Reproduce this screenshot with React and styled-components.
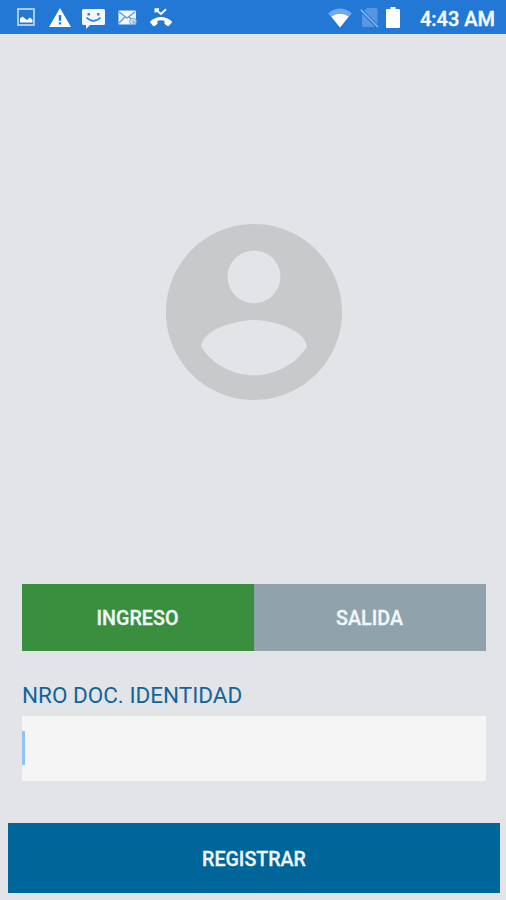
import React, { Component } from 'react';
import styled, { createGlobalStyle } from 'styled-components';

class App extends Component {
  state = { mode: 'ingreso' };

  render() {
    const { mode } = this.state;

    return (
      <>
        <GlobalStyle />
        <Screen>
          <StatusBar>
            <Notifications>
              <Icon $width={18} $height={18} viewBox="0 0 18 18">
                <rect x="1" y="1" width="16" height="16" fill="none" stroke="#b4d2f4" strokeWidth="1.8" />
                <path d="M3 14.500v-4L5.500 8.500l3 2.500 1.500 1 3-2.500 2.500 2.500v2.500z" fill="#fff" />
              </Icon>
              <Icon $width={22} $height={19} $left={14} viewBox="0 0 22 19">
                <path
                  fillRule="evenodd"
                  d="M0 19h22L11 0 0 19zm12.200-2.500H9.800v-2.300h2.400v2.300zm0-3.800H9.800V7h2.400v5.700z"
                  fill="#fff"
                />
              </Icon>
              <Icon $width={23} $height={20} $left={11} $top={1} viewBox="0 0 23 20">
                <path d="M1.500 0h20Q23 0 23 1.500v13q0 1.500-1.500 1.500H8l-4 4v-4H1.500Q0 16 0 14.500v-13Q0 0 1.500 0z" fill="#f2f8ff" />
                <path d="M5.500 4H8v2.500H5.500zM15 4h2.500v2.500H15z" fill="#3d83d9" />
                <path d="M4.500 8.500Q11.500 15.500 18.500 8.500" fill="none" stroke="#3d83d9" strokeWidth="1.700" />
              </Icon>
              <Icon $width={19} $height={16} $left={13} $top={2} viewBox="0 0 19 16">
                <rect x="0.500" y="0.500" width="17.500" height="14" rx="1" fill="#f2f8ff" />
                <path
                  d="M1 2l8 6 8-6M1 13l6-6M11 7l3 3"
                  fill="none"
                  stroke="#5a97e0"
                  strokeWidth="1.300"
                />
                <circle cx="15" cy="11.500" r="3.300" fill="#d9e9fb" stroke="#6ea4e6" />
                <path d="M14 11.500q1-2 2 0t-1.500 1.500" fill="none" stroke="#4789dc" strokeWidth="0.900" />
              </Icon>
              <Icon $width={22} $height={19} $left={13} viewBox="0 0 22 19">
                <path d="M5.500 4.500V1.300H9M6 1.800l5 4.200 5-4.700" fill="none" stroke="#fff" strokeWidth="1.900" />
                <path
                  d="M11 9C6.800 9 3 10.700.4 13.300c-.5.500-.5 1 0 1.500L3 17.800c.5.500 1 .5 1.500.1L7 16.200c.4-.3.500-.6.500-1v-2.500q3.500-1 7 0v2.500c0 .4.100.7.500 1l2.500 1.700c.5.400 1 .4 1.500-.1l2.600-3c.5-.5.5-1 0-1.500C19 10.700 15.200 9 11 9z"
                  fill="#fff"
                />
              </Icon>
            </Notifications>
            <System>
              <Icon $width={24} $height={20} viewBox="0 0 25 20">
                <path d="M12.500 20L0 5Q12.500-5 25 5z" fill="#72a9e8" />
                <path d="M12.500 20L3.500 8.500Q12.500 2.500 21.500 8.500z" fill="#fff" />
              </Icon>
              <Icon $width={19} $height={20} $left={8} viewBox="0 0 19 20">
                <path d="M7 0h9q1.500 0 1.500 1.500V16L4.500 3zM2 5.500L15 19H3.500Q2 19 2 17.500z" fill="#5796e1" />
                <path d="M.8 1.800L18 19" stroke="#8ab8ed" strokeWidth="1.500" />
              </Icon>
              <Icon $width={14} $height={21} $left={7} $top={-1} viewBox="0 0 14 21">
                <path d="M4.500 0h5v2H13q1 0 1 1v17q0 1-1 1H1q-1 0-1-1V3q0-1 1-1h3.500z" fill="#fff" />
              </Icon>
              <Clock>4:43 AM</Clock>
            </System>
          </StatusBar>

          <Photo>
            <Avatar viewBox="2 2 20 20">
              <path
                fillRule="evenodd"
                d="M12 2C6.480 2 2 6.480 2 12s4.480 10 10 10 10-4.480 10-10S17.520 2 12 2zm0 3c1.660 0 3 1.340 3 3s-1.340 3-3 3-3-1.340-3-3 1.340-3 3-3zm0 14.200c-2.500 0-4.710-1.280-6-3.220.030-1.990 4-3.080 6-3.080 1.990 0 5.970 1.090 6 3.080-1.290 1.940-3.500 3.220-6 3.220z"
              />
            </Avatar>
          </Photo>

          <Form>
            <Toggle>
              <ToggleButton
                type="button"
                $active={mode === 'ingreso'}
                onClick={() => this.setState({ mode: 'ingreso' })}
              >
                INGRESO
              </ToggleButton>
              <ToggleButton
                type="button"
                $active={mode === 'salida'}
                onClick={() => this.setState({ mode: 'salida' })}
              >
                SALIDA
              </ToggleButton>
            </Toggle>
            <Label>NRO DOC. IDENTIDAD</Label>
            <Field>
              <Caret />
            </Field>
          </Form>

          <Submit type="button">REGISTRAR</Submit>
        </Screen>
      </>
    );
  }
}

export default App;

const GlobalStyle = createGlobalStyle`
  * {
    box-sizing: border-box;
  }

  body {
    margin: 0;
    padding: 0;
    font-family: Roboto, sans-serif;
  }
`;

const Screen = styled.main`
  display: flex;
  flex-direction: column;
  width: 506px;
  height: 900px;
  overflow: hidden;
  background-color: #e2e4e8;
`;

const StatusBar = styled.header`
  display: flex;
  justify-content: space-between;
  height: 34px;
  padding: 8px 11px 0 17px;
  background-color: #2377d5;
`;

const Notifications = styled.div`
  display: flex;
  align-items: flex-start;
`;

const System = styled.div`
  display: flex;
  align-items: flex-start;
`;

const Icon = styled.svg`
  display: block;
  flex: none;
  width: ${props => props.$width}px;
  height: ${props => props.$height}px;
  margin-left: ${props => props.$left || 0}px;
  margin-top: ${props => props.$top || 0}px;
`;

const Clock = styled.span`
  margin-left: 20px;
  font-weight: 500;
  font-size: 20px;
  line-height: 22px;
  white-space: nowrap;
  color: #f4f9ff;
  -webkit-text-stroke: 0.4px #f4f9ff;
`;

const Photo = styled.section`
  display: flex;
  justify-content: center;
  height: 550px;
  padding: 190px 0 0 1px;
`;

const Avatar = styled.svg`
  width: 176px;
  height: 176px;
  fill: #c8c9cb;
`;

const Form = styled.section`
  display: flex;
  flex-direction: column;
  padding: 0 20px 0 22px;
`;

const Toggle = styled.div`
  display: grid;
  grid-template-columns: 1fr 1fr;
  height: 67px;
`;

const ToggleButton = styled.button`
  margin: 0;
  padding: 2px 1px 0 0;
  border: 0;
  font-family: Roboto, sans-serif;
  font-weight: 500;
  font-size: 19.7px;
  color: #f1f7f8;
  -webkit-text-stroke: 0.3px #f1f7f8;
  background-color: ${props => (props.$active ? '#3a8f3e' : '#90a3ad')};
`;

const Label = styled.label`
  margin-top: 31px;
  font-size: 22.5px;
  line-height: 26px;
  color: #13649b;
`;

const Field = styled.div`
  display: flex;
  height: 65px;
  margin-top: 8px;
  padding-top: 15px;
  background-color: #f5f5f5;
`;

const Caret = styled.span`
  width: 3px;
  height: 34px;
  background-color: #91c3fa;
`;

const Submit = styled.button`
  height: 70px;
  margin: 42px 6px 0 8px;
  padding: 2px 0 0;
  border: 0;
  font-family: Roboto, sans-serif;
  font-weight: 500;
  font-size: 19.6px;
  color: #f1f6fd;
  -webkit-text-stroke: 0.3px #f1f6fd;
  background-color: #006599;
`;
